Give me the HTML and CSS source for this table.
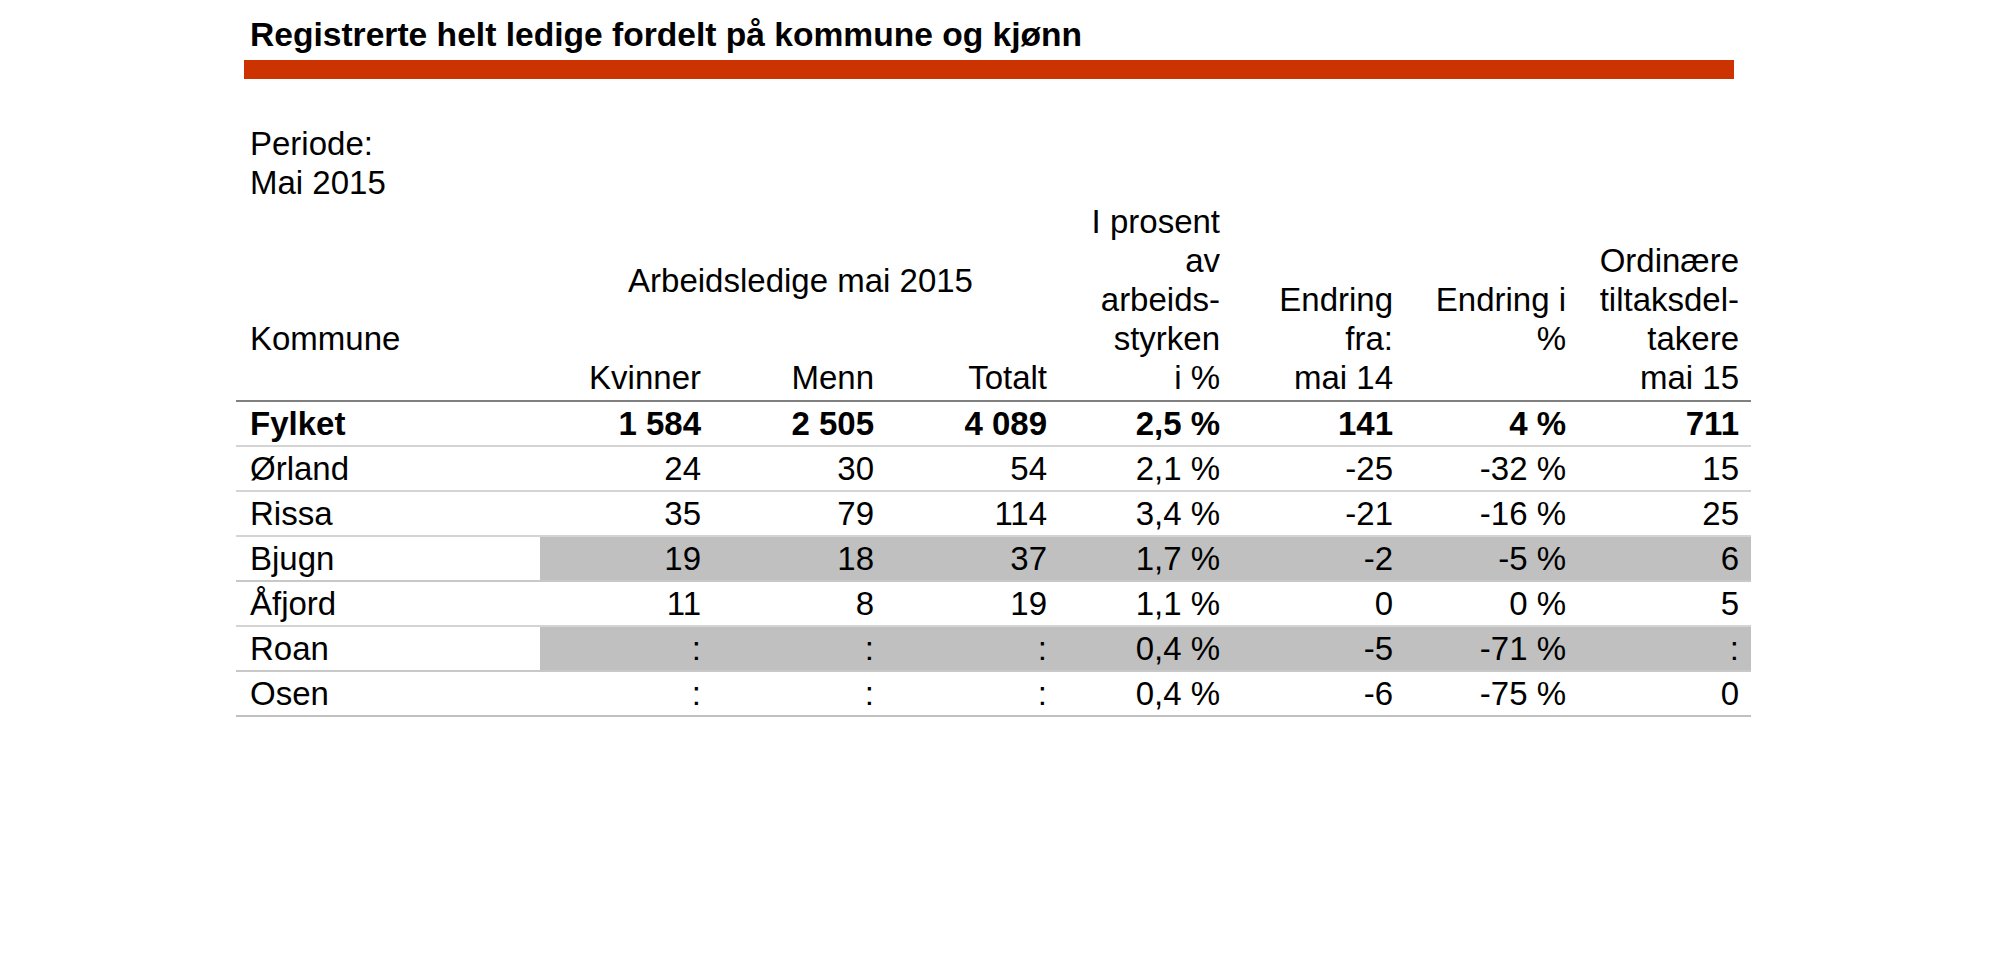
FILE: index.html
```html
<!DOCTYPE html>
<html lang="no">
<head>
<meta charset="utf-8">
<title>Registrerte helt ledige fordelt på kommune og kjønn</title>
<link rel="stylesheet" href="styles.css">
</head>
<body>
<div class="page">
  <h1 class="title">Registrerte helt ledige fordelt på kommune og kjønn</h1>
  <div class="bar"></div>
  <div class="period">Periode:<br>Mai 2015</div>
  <table class="stats">
    <colgroup>
      <col class="c-name">
      <col class="c-num"><col class="c-num"><col class="c-num"><col class="c-num">
      <col class="c-num"><col class="c-num"><col class="c-num">
    </colgroup>
    <thead>
      <tr class="h1row">
        <th class="h-name" rowspan="2">Kommune</th>
        <th class="h-group" colspan="3">Arbeidsledige mai 2015</th>
        <th class="h-tall" rowspan="2">I prosent<br>av<br>arbeids-<br>styrken<br>i %</th>
        <th class="h-tall" rowspan="2">Endring<br>fra:<br>mai 14</th>
        <th class="h-tall h-raised" rowspan="2">Endring i<br>%</th>
        <th class="h-tall" rowspan="2">Ordinære<br>tiltaksdel-<br>takere<br>mai 15</th>
      </tr>
      <tr class="h2row">
        <th class="h-sub">Kvinner</th>
        <th class="h-sub">Menn</th>
        <th class="h-sub">Totalt</th>
      </tr>
    </thead>
    <tbody>
      <tr class="total">
        <td>Fylket</td><td>1 584</td><td>2 505</td><td>4 089</td><td>2,5 %</td><td>141</td><td>4 %</td><td>711</td>
      </tr>
      <tr>
        <td>Ørland</td><td>24</td><td>30</td><td>54</td><td>2,1 %</td><td>-25</td><td>-32 %</td><td>15</td>
      </tr>
      <tr>
        <td>Rissa</td><td>35</td><td>79</td><td>114</td><td>3,4 %</td><td>-21</td><td>-16 %</td><td>25</td>
      </tr>
      <tr class="shaded">
        <td>Bjugn</td><td>19</td><td>18</td><td>37</td><td>1,7 %</td><td>-2</td><td>-5 %</td><td>6</td>
      </tr>
      <tr>
        <td>Åfjord</td><td>11</td><td>8</td><td>19</td><td>1,1 %</td><td>0</td><td>0 %</td><td>5</td>
      </tr>
      <tr class="shaded">
        <td>Roan</td><td>:</td><td>:</td><td>:</td><td>0,4 %</td><td>-5</td><td>-71 %</td><td>:</td>
      </tr>
      <tr class="last">
        <td>Osen</td><td>:</td><td>:</td><td>:</td><td>0,4 %</td><td>-6</td><td>-75 %</td><td>0</td>
      </tr>
    </tbody>
  </table>
</div>
</body>
</html>
```

FILE: styles.css
```css
html, body {
  margin: 0;
  padding: 0;
  background: #ffffff;
}

body {
  font-family: "Liberation Sans", Arial, sans-serif;
  color: #000000;
}

.page {
  width: 1515px;
  margin-left: 236px;
  padding-top: 15px;
}

.title {
  margin: 0;
  padding-left: 14px;
  font-size: 33.6px;
  font-weight: bold;
  line-height: 39px;
}

.bar {
  height: 19px;
  margin: 6px 17px 0 8px;
  background: #cc3300;
}

.period {
  margin-top: 45px;
  padding-left: 14px;
  font-size: 33px;
  line-height: 39px;
}

.stats {
  width: 1515px;
  border-collapse: collapse;
  table-layout: fixed;
  font-size: 33px;
  line-height: 39px;
}

.c-name { width: 304px; }
.c-num { width: 173px; }

.stats th {
  font-weight: normal;
  padding: 0 12px 0 14px;
  text-align: right;
}

.h-name {
  text-align: left !important;
  vertical-align: bottom;
  padding-bottom: 42px !important;
  border-bottom: 2px solid #808080;
}

.h-group {
  height: 156px;
  text-align: center !important;
  vertical-align: middle;
}

.h-tall {
  vertical-align: bottom;
  padding-bottom: 3px !important;
  border-bottom: 2px solid #808080;
}

.h-tall.h-raised {
  padding-bottom: 42px !important;
}

.h2row th {
  height: 38px;
  vertical-align: bottom;
  padding-bottom: 3px;
  border-bottom: 2px solid #808080;
}

.stats td {
  height: 43px;
  padding: 0 12px 0 14px;
  text-align: right;
  vertical-align: middle;
  border-bottom: 2px solid #d4d4d4;
  white-space: nowrap;
}

.stats td:first-child {
  text-align: left;
}

.total td {
  font-weight: bold;
}

.shaded td {
  background: #c0c0c0;
  border-bottom-color: #c8c8c8;
}

.shaded td:first-child {
  background: #ffffff;
}

.last td {
  border-bottom-color: #c0c0c0;
}
```
